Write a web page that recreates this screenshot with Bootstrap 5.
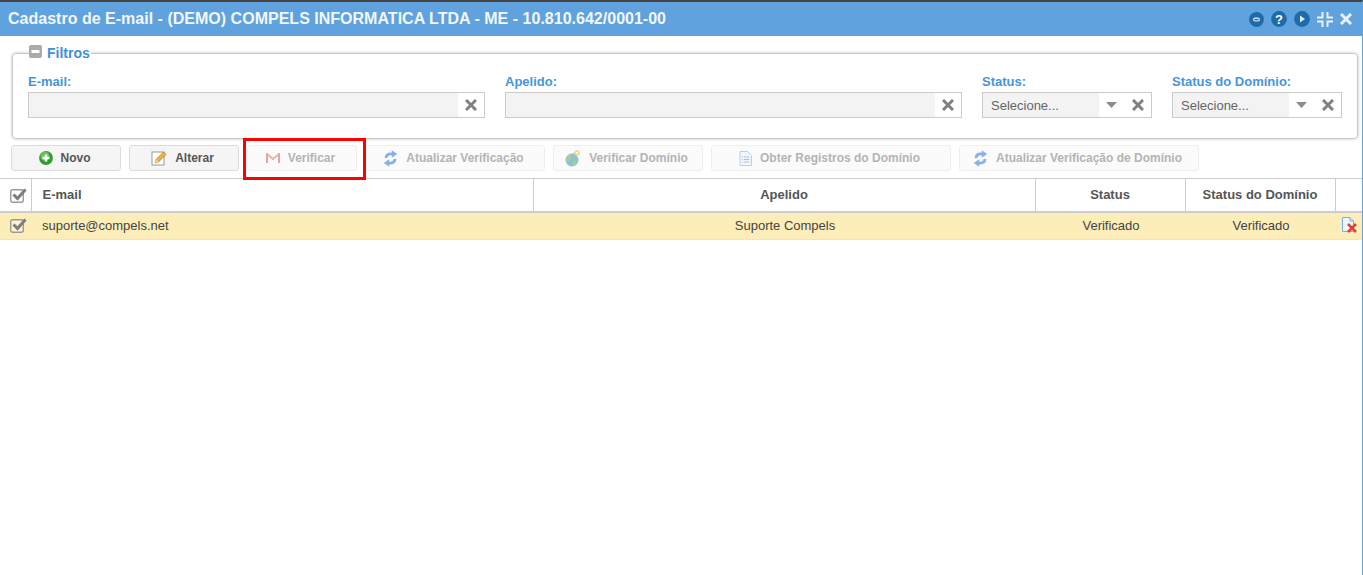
<!DOCTYPE html>
<html lang="pt-BR">
<head>
<meta charset="utf-8">
<title>Cadastro de E-mail</title>
<link href="https://cdn.jsdelivr.net/npm/bootstrap@5.3.0/dist/css/bootstrap.min.css" rel="stylesheet">
<style>
html,body{height:100%;}
body{font-family:"Liberation Sans",Arial,sans-serif;background:#fff;color:#444;overflow:hidden;}
.win{position:relative;height:575px;border-top:2px solid #444;border-right:1px solid #5fa2dd;}
.win-head{height:34px;background:#5fa2dd;color:#f2f7fc;font-size:16px;font-weight:700;padding:0 8px;margin-right:-1px;letter-spacing:.013px;}
.win-tools{gap:7px;margin-right:3px;}
.filter-box{margin:9px 4px 0 12px;height:94px;border:1px solid #c9c9c9;border-radius:4px;box-shadow:0 0 3px rgba(0,0,0,.28);padding:0 15px;}
.filter-box legend{float:none;width:auto;margin:0 0 0 1px;padding:0 1px 0 0;font-size:14px;line-height:17px;font-weight:700;color:#3f90d9;display:flex;align-items:center;gap:5px;background:#fff;}
.legend-ico{margin-top:-5px;}
.filter-row{gap:20px;margin-top:12px;}
.fcol-wide{flex:1 1 0;}
.fcol-narrow{flex:0 0 170px;}
.flabel{display:block;font-size:13px;line-height:16px;font-weight:700;color:#4595dd;margin:0 0 2px;}
.fbox{height:26px;border:1px solid #cbcbcb;display:flex;background:#fff;}
.ffill{flex:1 1 0;min-width:0;background:#f3f3f3;border:0;padding:1px 8px 0;font-size:13px;line-height:24px;color:#666;}
.ficon{width:26px;display:flex;align-items:center;justify-content:center;flex:none;}
.ficon-caret{width:24px;}
.ficon-x{width:28px;padding-left:2px;}
.tool-row{gap:8px;margin:6px 0 0 11px;height:26px;}
.tbtn{height:26px;border:1px solid #dcdcdc;border-radius:3px;background:#f5f5f5;font-size:12px;font-weight:700;color:#555;display:flex;align-items:center;justify-content:center;gap:8px;padding:0 3px 0 0;}
.tbtn.off{background:#fbfbfb;border-color:#eee;color:#b4b4b4;opacity:1;}
.tbtn.off svg{opacity:.55;}
.w110{width:110px}.w180{width:180px}.w150{width:150px}.w240{width:240px}
.mark-box{position:absolute;left:243px;top:136px;width:123px;height:42px;border:3px solid #f00;pointer-events:none;}
.grid-wrap{margin-top:7px;}
.data-grid{table-layout:fixed;width:1362px;margin:0;border-collapse:collapse;font-size:12px;}
.data-grid th,.data-grid td{padding:0 10px;vertical-align:middle;box-shadow:none;background:transparent;color:#444;}
.data-grid thead th{height:33px;border-top:1px solid #ccc;border-bottom:2px solid #ccc;border-left:1px solid #ccc;font-size:13px;font-weight:700;color:#555;text-align:center;}
.data-grid thead th:first-child{border-left:0;padding:0 0 0 10px;text-align:left;}
.data-grid tbody td{height:28px;background:#fdedb9;border:0;border-bottom:1px solid #f6e3ae;font-size:13px;color:#444;text-align:center;padding:0 9px 0 11px;}
.data-grid tbody td:first-child{padding:0 0 3px 10px;text-align:left;}
.data-grid .tleft{text-align:left;}
.data-grid thead .tleft{padding-left:11px;text-align:left;}
.data-grid tbody .ico-cell{padding:0 0 3px 6px;text-align:left;}
.data-grid svg{display:inline-block;vertical-align:middle;}
</style>
</head>
<body>
<div class="win">
  <div class="win-head d-flex align-items-center justify-content-between">
    <span>Cadastro de E-mail - (DEMO) COMPELS INFORMATICA LTDA - ME - 10.810.642/0001-00</span>
    <span class="win-tools d-flex align-items-center">
      <svg width="15" height="15" viewBox="0 0 15 15"><circle cx="7.500" cy="7.500" r="7.400" fill="#1f6aa8"/><rect x="4" y="5.600" width="7" height="4" rx="2" fill="#cfe1f2"/><rect x="5.400" y="7" width="4.200" height="1.200" fill="#1f6aa8"/></svg>
      <svg width="16" height="16" viewBox="0 0 16 16"><circle cx="8" cy="8" r="7.900" fill="#1f6aa8"/><text x="8" y="12.700" text-anchor="middle" font-family="Liberation Sans" font-weight="700" font-size="13" fill="#fff">?</text></svg>
      <svg width="16" height="16" viewBox="0 0 16 16"><circle cx="8" cy="8" r="7.900" fill="#1f6aa8"/><path d="M6 4.500 11 8 6 11.500Z" fill="#dcebf7"/></svg>
      <svg width="16" height="15" viewBox="0 0 16 15" fill="none" stroke="#eaf2fa" stroke-width="2"><path d="M5.500 0V5.500H0M10.500 0V5.500H16M5.500 15V9.500H0M10.500 15V9.500H16"/></svg>
      <svg width="12" height="12" viewBox="0 0 12 12" fill="none" stroke="#eaf2fa" stroke-width="3"><path d="M1 1 11 11M11 1 1 11"/></svg>
    </span>
  </div>

  <fieldset class="filter-box">
    <legend>
      <svg class="legend-ico" width="13" height="13" viewBox="0 0 13 13"><rect width="13" height="13" rx="2" fill="#ababab"/><rect x="2.500" y="5" width="8" height="3" fill="#fff"/></svg>
      Filtros
    </legend>
    <div class="filter-row d-flex">
      <div class="fcol-wide">
        <label class="flabel">E-mail:</label>
        <div class="fbox"><div class="ffill"></div><div class="ficon"><svg width="12" height="12" viewBox="0 0 12 12" fill="none" stroke="#808080" stroke-width="3"><path d="M1 1 11 11M11 1 1 11"/></svg></div></div>
      </div>
      <div class="fcol-wide">
        <label class="flabel">Apelido:</label>
        <div class="fbox"><div class="ffill"></div><div class="ficon"><svg width="12" height="12" viewBox="0 0 12 12" fill="none" stroke="#808080" stroke-width="3"><path d="M1 1 11 11M11 1 1 11"/></svg></div></div>
      </div>
      <div class="fcol-narrow">
        <label class="flabel">Status:</label>
        <div class="fbox"><div class="ffill">Selecione...</div><div class="ficon ficon-caret"><svg width="11" height="6" viewBox="0 0 11 6"><path d="M0 0H11L5.500 6Z" fill="#8c8c8c"/></svg></div><div class="ficon ficon-x"><svg width="12" height="12" viewBox="0 0 12 12" fill="none" stroke="#808080" stroke-width="3"><path d="M1 1 11 11M11 1 1 11"/></svg></div></div>
      </div>
      <div class="fcol-narrow">
        <label class="flabel">Status do Domínio:</label>
        <div class="fbox"><div class="ffill">Selecione...</div><div class="ficon ficon-caret"><svg width="11" height="6" viewBox="0 0 11 6"><path d="M0 0H11L5.500 6Z" fill="#8c8c8c"/></svg></div><div class="ficon ficon-x"><svg width="12" height="12" viewBox="0 0 12 12" fill="none" stroke="#808080" stroke-width="3"><path d="M1 1 11 11M11 1 1 11"/></svg></div></div>
      </div>
    </div>
  </fieldset>

  <div class="tool-row d-flex">
    <button type="button" class="tbtn w110">
      <svg width="14" height="14" viewBox="0 0 14 14"><circle cx="7" cy="7" r="6.900" fill="#2f9e2f"/><circle cx="6" cy="5" r="4.500" fill="#7fd06f" opacity=".7"/><path d="M5.700 3.500H8.300V5.700H10.500V8.300H8.300V10.500H5.700V8.300H3.500V5.700H5.700Z" fill="#fff"/></svg>
      Novo
    </button>
    <button type="button" class="tbtn w110">
      <svg width="16" height="16" viewBox="0 0 16 16"><rect x="1" y="2" width="12" height="13" fill="#fff" stroke="#999"/><path d="M4 13 5 9.500 12.500 2 15 4.500 7.500 12Z" fill="#f2b33d" stroke="#a8741c" stroke-width=".7"/><path d="M4 13 5 9.500 7.500 12Z" fill="#f5dfb0"/></svg>
      Alterar
    </button>
    <button type="button" class="tbtn off w110">
      <svg width="14" height="11" viewBox="0 0 14 11" fill="none"><path d="M1 10V1L7 6 13 1V10" stroke="#dc4a3d" stroke-width="1.800"/><path d="M1.500 1.500 7 6 12.500 1.500" stroke="#c9c9c9" stroke-width=".8"/></svg>
      Verificar
    </button>
    <button type="button" class="tbtn off w180">
      <svg width="15" height="17" viewBox="0 0 14 16" fill="#2f6fe0"><path d="M1.500 7.500C1.500 3.800 5 1.600 8.200 2.600V.2L13.300 3.800 8.200 7.300V5C6 4.500 4.500 5.500 4.100 7.500Z"/><path d="M12.500 8.500C12.500 12.200 9 14.400 5.800 13.400V15.800L.7 12.200 5.800 8.700V11C8 11.500 9.500 10.500 9.900 8.500Z"/></svg>
      Atualizar Verificação
    </button>
    <button type="button" class="tbtn off w150">
      <svg width="16" height="17" viewBox="0 0 16 17"><circle cx="7" cy="10" r="6.500" fill="#2f93c9"/><path d="M3 6.500C5 6 6.500 7 6 9S3 11 2 13C.5 10.500 1.500 8 3 6.500ZM8 11C10 10 12 11 12 13 10.500 15.500 8.500 16 7.500 15.500 8 14 7 12 8 11Z" fill="#5fae2c"/><path d="M7.500 9 9 3" stroke="#777" stroke-width="1.300"/><path d="M4.500 3.500V7" stroke="#b9a13a" stroke-width="1.500"/><circle cx="12" cy="3" r="2.800" fill="#ecb52e"/><circle cx="12" cy="3" r="1" fill="#fff"/></svg>
      Verificar Domínio
    </button>
    <button type="button" class="tbtn off w240">
      <svg width="13" height="15" viewBox="0 0 13 15"><path d="M1 .5H8.500L12.500 4.500V14.500H1Z" fill="#eef5fd" stroke="#7aaee8"/><path d="M3 6H4M5 6H10.500M3 8.500H4M5 8.500H10.500M3 11H4M5 11H10.500" stroke="#5d97de"/></svg>
      Obter Registros do Domínio
    </button>
    <button type="button" class="tbtn off w240">
      <svg width="15" height="17" viewBox="0 0 14 16" fill="#2f6fe0"><path d="M1.500 7.500C1.500 3.800 5 1.600 8.200 2.600V.2L13.300 3.800 8.200 7.300V5C6 4.500 4.500 5.500 4.100 7.500Z"/><path d="M12.500 8.500C12.500 12.200 9 14.400 5.800 13.400V15.800L.7 12.200 5.800 8.700V11C8 11.500 9.500 10.500 9.900 8.500Z"/></svg>
      Atualizar Verificação de Domínio
    </button>
  </div>

  <div class="mark-box"></div>

  <div class="grid-wrap">
    <table class="table data-grid">
      <colgroup><col style="width:31px"><col style="width:502px"><col style="width:502px"><col style="width:150px"><col style="width:150px"><col style="width:27px"></colgroup>
      <thead>
        <tr>
          <th><svg width="18" height="17" viewBox="0 0 18 17"><rect x=".7" y="2.700" width="12.600" height="12.600" rx="2" fill="#fff" stroke="#9a9a9a" stroke-width="1.400"/><path d="M3.500 7.500 7.500 11.500 15.500 2.500" fill="none" stroke="#7d7d7d" stroke-width="3"/></svg></th>
          <th class="tleft">E-mail</th>
          <th>Apelido</th>
          <th>Status</th>
          <th>Status do Domínio</th>
          <th></th>
        </tr>
      </thead>
      <tbody>
        <tr>
          <td><svg width="18" height="17" viewBox="0 0 18 17"><rect x=".7" y="2.700" width="12.600" height="12.600" rx="2" fill="#fdf3cf" stroke="#9a9a9a" stroke-width="1.400"/><path d="M3.500 7.500 7.500 11.500 15.500 2.500" fill="none" stroke="#7d7d7d" stroke-width="3"/></svg></td>
          <td class="tleft">suporte@compels.net</td>
          <td>Suporte Compels</td>
          <td>Verificado</td>
          <td>Verificado</td>
          <td class="ico-cell"><svg width="17" height="16" viewBox="0 0 17 16"><path d="M1.500 .5H9L12.500 4V14.500H1.500Z" fill="#eef5fd" stroke="#7aaee8"/><path d="M9 .5V4H12.500" fill="#cfe0f5" stroke="#7aaee8"/><path d="M7 7 15 15M15 7 7 15" stroke="#d9433b" stroke-width="2.600"/></svg></td>
        </tr>
      </tbody>
    </table>
  </div>
</div>
</body>
</html>
